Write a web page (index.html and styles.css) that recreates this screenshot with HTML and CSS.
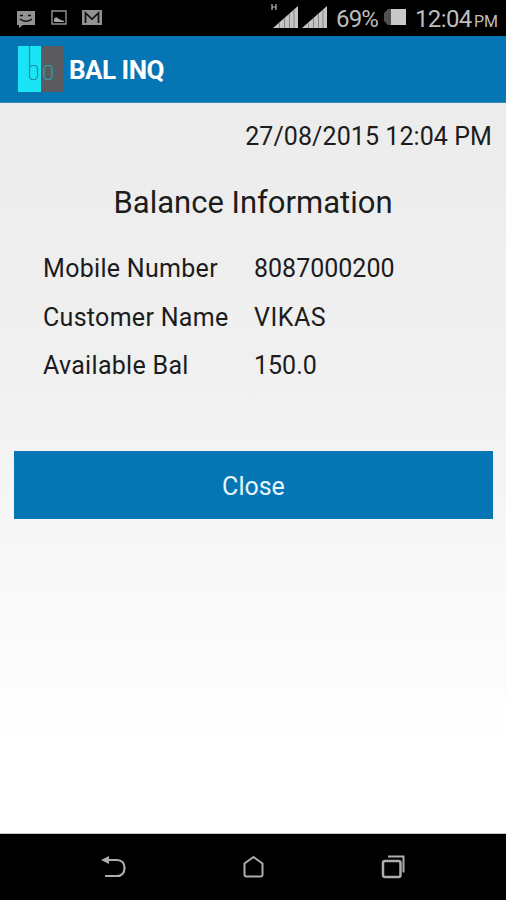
FILE: index.html
```
<!DOCTYPE html>
<html lang="en">
<head>
  <meta charset="UTF-8">
  <meta name="viewport" content="width=device-width, initial-scale=1.0">
  <title>BAL INQ</title>
  <link rel="stylesheet" href="styles.css">
</head>
<body>
  <div class="status-bar">
    <div class="notifications">
      <svg width="20" height="18" viewBox="0 0 20 18">
        <path d="M1 1h18v14H7l-4 3v-3H1z" fill="#929292"/>
        <path d="M4 5.5h3M12 5.5h3M4 9c3 3 9 3 12 0" fill="none" stroke="#111" stroke-width="1.5"/>
      </svg>
      <svg width="16" height="15" viewBox="0 0 16 15">
        <path d="M1 1h14v13H1z" fill="none" stroke="#929292" stroke-width="1.4"/>
        <path d="M3 12V9l2-2 3 2 2 1 3 1v1z" fill="#a5a5a5"/>
      </svg>
      <svg width="20" height="15" viewBox="0 0 20 15">
        <path d="M0 0h20v15H0z" fill="#929292"/>
        <path d="M3.500 13V3l6.500 6 6.500-6v10" fill="none" stroke="#111" stroke-width="1.7"/>
      </svg>
    </div>
    <div class="indicators">
      <svg class="signal" width="58" height="26" viewBox="0 0 58 26">
        <path d="M2 1v6M6 1v6M2 4h4" fill="none" stroke="#bbb" stroke-width="1.2"/>
        <path d="M3 25L28 3v22zM32 25L57 3v22z" fill="#c4c4c4"/>
        <path d="M9.500 20v5M14.500 15v10M19.500 11v14M24 7v18M38.500 20v5M43.500 15v10M48.500 11v14M53 7v18" stroke="#858585" stroke-width="1"/>
      </svg>
      <span class="percent">69%</span>
      <svg class="battery" width="24" height="17" viewBox="0 0 24 17">
        <path d="M9 0H5L1 4v8l4 4h4z" fill="#505050"/>
        <path d="M8 0h15v16H8z" fill="#c8c8c8"/>
      </svg>
      <span class="time">12:04</span>
      <span class="ampm">PM</span>
    </div>
  </div>

  <div class="header">
    <svg class="logo" width="46" height="46" viewBox="0 0 46 46">
      <path d="M0 0h23v46H0z" fill="#19e5f6"/>
      <path d="M23 0h23v46H23z" fill="#5b5b5d"/>
      <path d="M11.500 0v31l2 2.500h4l2-2.500v-9l-2-2.500h-4l-2 2.500" fill="none" stroke="#1b8f9b" stroke-width="1.200"/>
      <path d="M28 19.500h4l2 2.500v9l-2 2.500h-4l-2-2.500v-9z" fill="none" stroke="#26a9b6" stroke-width="1.200"/>
    </svg>
    <h1>BAL INQ</h1>
  </div>

  <div class="content">
    <div class="date">27/08/2015 12:04 PM</div>
    <h2>Balance Information</h2>
    <div class="info-list">
      <span class="label">Mobile Number</span><span>8087000200</span>
      <span class="label">Customer Name</span><span class="name">VIKAS</span>
      <span class="label">Available Bal</span><span>150.0</span>
    </div>
    <button class="close-btn">Close</button>
  </div>

  <div class="nav-bar">
    <svg width="28" height="28" viewBox="0 0 28 28">
      <path d="M7 7h10c5 0 7.500 3.500 7.500 8s-2.500 8-7.500 8H5" fill="none" stroke="#adadad" stroke-width="2.200"/>
      <path d="M1 7l8-4v8z" fill="#adadad"/>
    </svg>
    <svg width="28" height="28" viewBox="0 0 28 28">
      <path d="M13.500 4l9 6.500v11c0 1.500-.5 2-2 2h-14c-1.500 0-2-.5-2-2v-11z" fill="none" stroke="#adadad" stroke-width="2" stroke-linejoin="round"/>
    </svg>
    <svg width="28" height="28" viewBox="0 0 28 28">
      <rect x="4" y="8" width="17.500" height="16" rx="2" fill="none" stroke="#adadad" stroke-width="2.500"/>
      <path d="M9 3.500h15.500v16" fill="none" stroke="#adadad" stroke-width="2"/>
    </svg>
  </div>
</body>
</html>
```
FILE: styles.css
```
* {
  box-sizing: border-box;
}
body {
  margin: 0;
  height: 900px;
  display: flex;
  flex-direction: column;
  font-family: Roboto, "Liberation Sans", sans-serif;
  color: #1c1c1c;
  overflow: hidden;
}
svg {
  display: block;
  flex: none;
}
.status-bar {
  height: 36px;
  background: #000;
  color: #bdbdbd;
  display: flex;
  justify-content: space-between;
}
.notifications {
  display: flex;
  gap: 15px;
  padding: 10px 0 0 16px;
}
.indicators {
  display: flex;
  align-items: baseline;
  padding-right: 8px;
  line-height: 38px;
  white-space: nowrap;
}
.signal {
  align-self: flex-start;
  margin: 3px 8px 0 0;
}
.percent {
  width: 47px;
  font-size: 24px;
  letter-spacing: -0.8px;
}
.battery {
  align-self: flex-start;
  margin: 9px 8px 0 0;
}
.time {
  width: 59px;
  font-size: 24px;
  letter-spacing: -0.6px;
}
.ampm {
  font-size: 16px;
}
.header {
  height: 67px;
  display: flex;
  align-items: center;
  gap: 5px;
  padding-left: 18px;
  background: #0675b4;
  border-bottom: 1px solid #3b8cba;
}
.header h1 {
  margin: 2px 0 0;
  font-size: 26px;
  font-weight: 700;
  letter-spacing: -0.5px;
  color: #fff;
}
.content {
  flex: 1;
  padding: 16px 14px 0;
  background: linear-gradient(#ececec, #f0f0f0 35%, #fff 88%);
  border-bottom: 1px solid #c4c4c4;
}
.date {
  height: 36px;
  line-height: 36px;
  font-size: 25px;
  letter-spacing: 0.08px;
  text-align: right;
}
.content h2 {
  margin: 26px 0 0;
  line-height: 44px;
  font-size: 31px;
  font-weight: 400;
  text-align: center;
}
.info-list {
  display: grid;
  grid-template-columns: 211px auto;
  grid-auto-rows: 48.5px;
  margin-top: 20px;
  padding-left: 29px;
  line-height: 48px;
  font-size: 25px;
}
.info-list .label {
  letter-spacing: 0.3px;
}
.info-list .name {
  letter-spacing: 0.5px;
}
.close-btn {
  display: block;
  width: 479px;
  height: 68px;
  margin-top: 60px;
  padding: 3px 0 0;
  border: 0;
  background: #0675b4;
  color: #e4f7ff;
  font-family: inherit;
  font-size: 25px;
}
.nav-bar {
  height: 66px;
  display: flex;
  justify-content: space-between;
  padding: 19px 99px 0 100px;
  background: #000;
}
```
